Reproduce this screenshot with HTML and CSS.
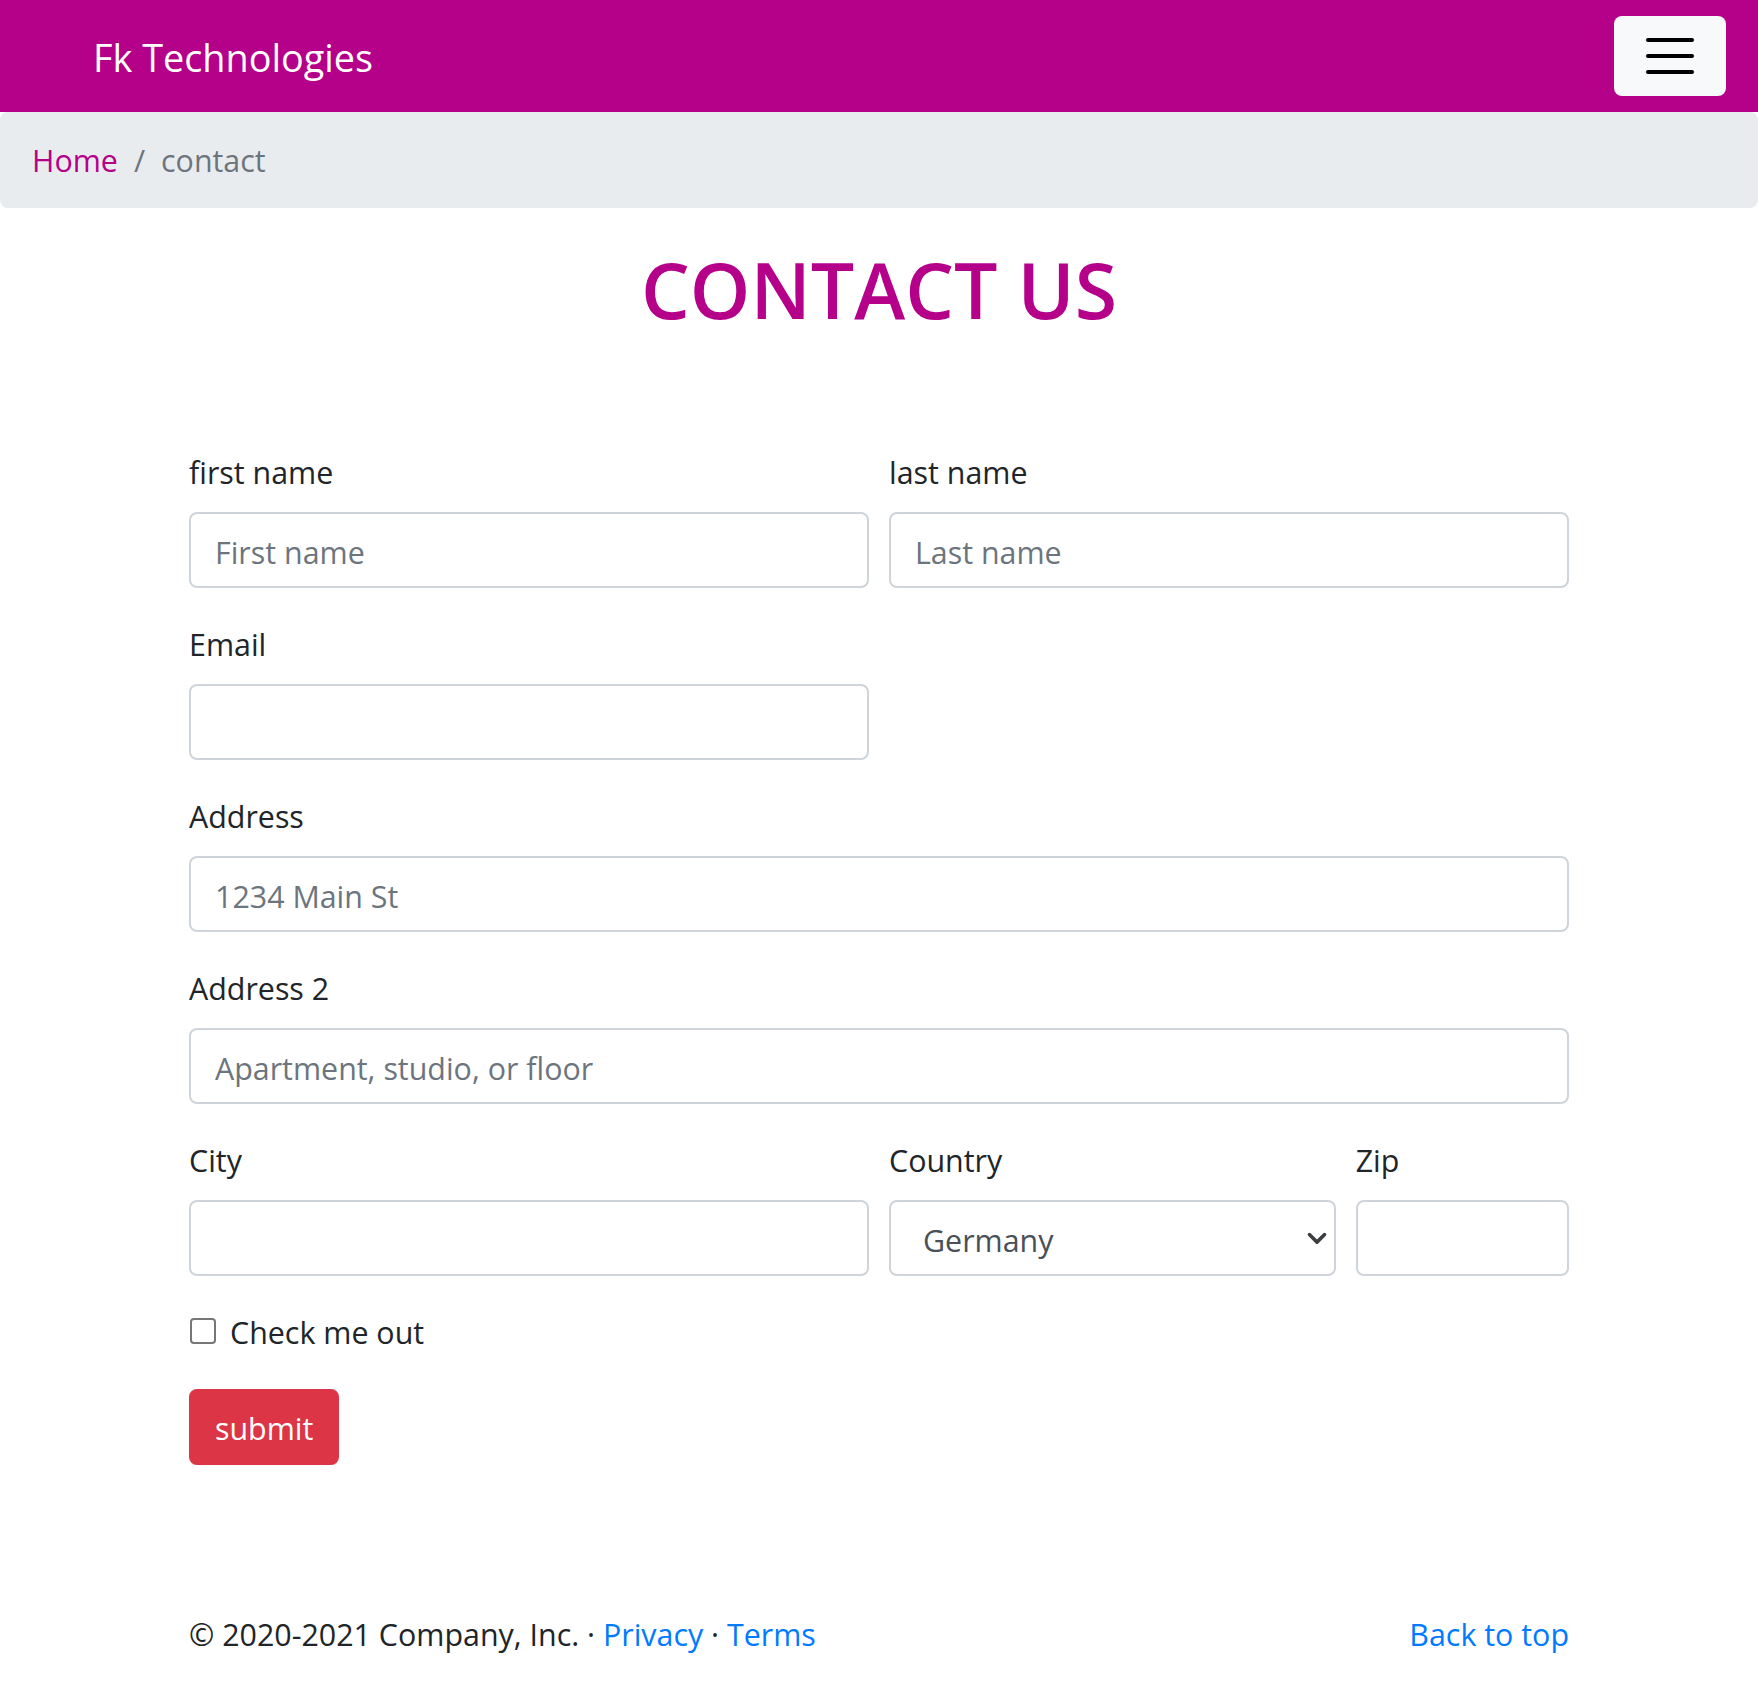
FILE: index.html
```html
<!DOCTYPE html>
<html lang="en">
<head>
<meta charset="utf-8">
<title>Contact</title>
<link rel="stylesheet" href="styles.css">
</head>
<body>
<nav class="navbar">
  <a class="brand" href="#">Fk Technologies</a>
  <button class="toggler" type="button" aria-label="Toggle navigation">
    <svg class="toggler-icon" viewBox="0 0 30 30" width="60" height="60"><path stroke="#000" stroke-width="2" stroke-linecap="round" stroke-miterlimit="10" d="M4 7h22M4 15h22M4 23h22"/></svg>
  </button>
</nav>
<ol class="breadcrumb">
  <li class="crumb"><a href="#">Home</a></li>
  <li class="crumb active"><span class="sep">/</span>contact</li>
</ol>
<main class="container">
  <h1 class="title">CONTACT US</h1>
  <form class="contact-form">
    <div class="row">
      <div class="group span6">
        <label class="label">first name</label>
        <input class="control" type="text" placeholder="First name">
      </div>
      <div class="group span6">
        <label class="label">last name</label>
        <input class="control" type="text" placeholder="Last name">
      </div>
    </div>
    <div class="row">
      <div class="group span6">
        <label class="label">Email</label>
        <input class="control" type="email">
      </div>
    </div>
    <div class="group">
      <label class="label">Address</label>
      <input class="control" type="text" placeholder="1234 Main St">
    </div>
    <div class="group">
      <label class="label">Address 2</label>
      <input class="control" type="text" placeholder="Apartment, studio, or floor">
    </div>
    <div class="row">
      <div class="group span6">
        <label class="label">City</label>
        <input class="control" type="text">
      </div>
      <div class="group span4">
        <label class="label">Country</label>
        <div class="select-wrap">
          <select class="control select"><option>Germany</option></select>
          <svg class="chevron" viewBox="0 0 16 16" width="22" height="22"><path d="M2.5 5.5 8 11l5.5-5.5" fill="none" stroke="#3c4043" stroke-width="2.6" stroke-linecap="round" stroke-linejoin="round"/></svg>
        </div>
      </div>
      <div class="group span2">
        <label class="label">Zip</label>
        <input class="control" type="text">
      </div>
    </div>
    <div class="group check">
      <input class="checkbox" type="checkbox" id="chk">
      <label class="check-label" for="chk">Check me out</label>
    </div>
    <button class="btn-submit" type="submit">submit</button>
  </form>
</main>
<footer class="container footer">
  <p class="foot-text">© 2020-2021 Company, Inc. · <a href="#">Privacy</a> · <a href="#">Terms</a></p>
  <p class="foot-text"><a href="#">Back to top</a></p>
</footer>
</body>
</html>
```
FILE: styles.css
```css
* { box-sizing: border-box; }
html, body { margin: 0; padding: 0; }
body {
  font-family: "Open Sans", "Noto Sans", "DejaVu Sans", sans-serif;
  font-size: 30.4px;
  line-height: 48px;
  color: #212529;
  background: #fff;
}
a { text-decoration: none; }

.navbar {
  display: flex;
  align-items: center;
  justify-content: space-between;
  background: #b5008a;
  padding: 16px 32px 16px 93px;
  height: 112px;
}
.brand {
  color: #fff;
  font-size: 37.8px;
  line-height: 60px;
  padding-top: 4px;
}
.toggler {
  width: 112px;
  height: 80px;
  padding: 8px 24px;
  border: 2px solid transparent;
  border-radius: 8px;
  background: #f8f9fa;
  display: flex;
  align-items: center;
  justify-content: center;
}
.toggler-icon { display: block; }

.breadcrumb {
  list-style: none;
  margin: 0 0 32px;
  padding: 25px 32px 23px;
  background: #e9ecef;
  border-radius: 8px;
  display: flex;
}
.crumb a { color: #b5008a; }
.crumb.active { color: #6c757d; }
.sep { padding: 0 16px; color: #6c757d; }

.container {
  width: 1440px;
  margin: 0 auto;
  padding: 0 30px;
}
.title {
  margin: 0 0 108px;
  text-align: center;
  color: #b5008a;
  font-size: 77px;
  line-height: 100px;
  font-weight: 600;
}
.row {
  display: grid;
  grid-template-columns: repeat(12, 1fr);
  column-gap: 20px;
}
.span6 { grid-column: span 6; }
.span4 { grid-column: span 4; }
.span2 { grid-column: span 2; }
.group { margin-bottom: 32px; }
.label {
  display: block;
  padding-top: 1px;
  margin-bottom: 15px;
}
.control {
  display: block;
  width: 100%;
  height: 76px;
  padding: 14px 24px 10px;
  border: 2px solid #ced4da;
  border-radius: 8px;
  font-family: inherit;
  font-size: 30.4px;
  line-height: 48px;
  color: #495057;
  background: #fff;
}
.control::placeholder { color: #6c757d; }
.select-wrap { position: relative; }
.select {
  appearance: none;
  -webkit-appearance: none;
  padding-left: 32px;
  padding-top: 15px;
  padding-bottom: 9px;
}
.chevron {
  position: absolute;
  right: 8px;
  top: 27px;
  pointer-events: none;
}
.check {
  display: flex;
  align-items: flex-start;
}
.check-label { padding-top: 1px; }
.checkbox {
  appearance: none;
  -webkit-appearance: none;
  width: 26px;
  height: 26px;
  margin: 10px 14px 0 1px;
  border: 2px solid #767676;
  border-radius: 4px;
  background: #fff;
}
.btn-submit {
  height: 76px;
  padding: 14px 24px 10px;
  border: 2px solid #dc3545;
  border-radius: 8px;
  background: #dc3545;
  color: #fff;
  font-family: inherit;
  font-size: 30.4px;
  line-height: 48px;
}
.footer {
  display: flex;
  justify-content: space-between;
  margin-top: 146px;
}
.foot-text { margin: 0 0 31px; }
.foot-text a { color: #007bff; }
```
